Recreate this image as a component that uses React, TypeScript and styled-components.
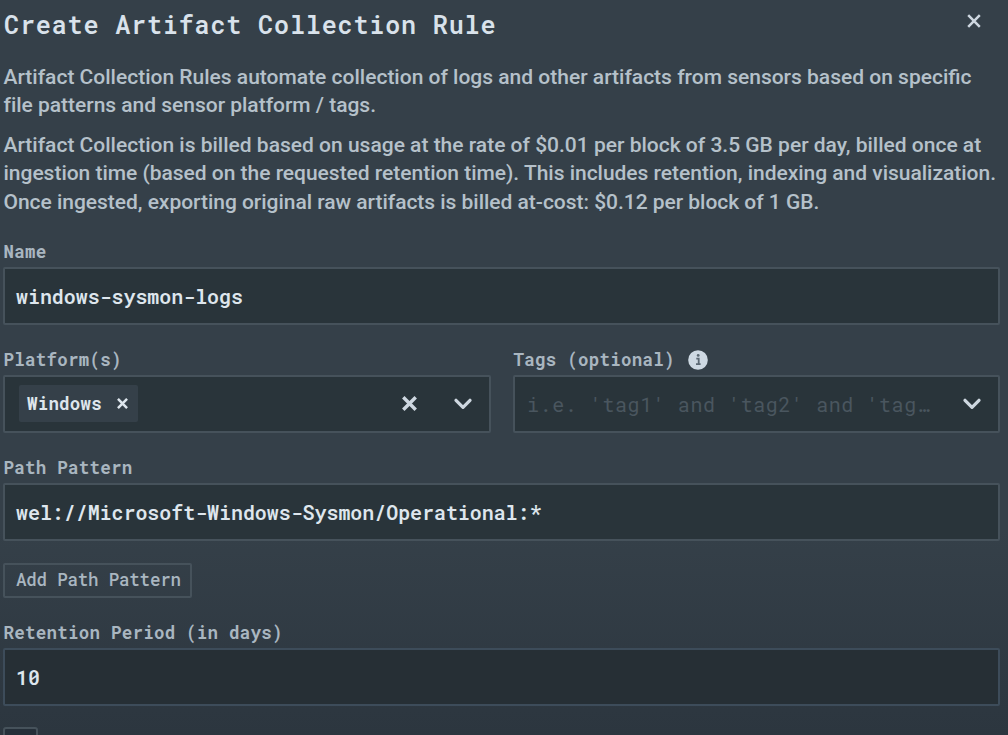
import React from "react";
import styled, { createGlobalStyle } from "styled-components";

const mono = `"Roboto Mono", "DejaVu Sans Mono", "Liberation Mono", monospace`;

const Global = createGlobalStyle`
  * { box-sizing: border-box; }
  html, body { margin: 0; background: #2d3740; }
  body { overflow: hidden; }
`;

const Dialog = styled.main`
  height: 735px;
  overflow: hidden;
  padding: 0 8px 0 3px;
  display: flex;
  flex-direction: column;
  background: linear-gradient(#354049 0, #354049 530px, #2d3740 710px, #2c363f 735px);
  font-family: Roboto, sans-serif;
  color: #b5c1ca;

  > * { flex-shrink: 0; }
`;

const Header = styled.header`
  display: flex;
  justify-content: space-between;
  align-items: flex-start;
  height: 63px;
  padding: 8px 19px 0 1px;
`;

const Title = styled.h1`
  margin: 0;
  font: 600 25px/34px ${mono};
  letter-spacing: 0.88px;
  color: #d9e2eb;
  white-space: nowrap;
`;

const IconButton = styled.button<{ $top?: number }>`
  display: flex;
  padding: 0;
  margin-top: ${(p) => p.$top ?? 0}px;
  border: 0;
  background: none;
  color: #ced7e0;
`;

const Copy = styled.p<{ $gap: number }>`
  margin: 0 0 ${(p) => p.$gap}px 0.5px;
  font-size: 21px;
  font-weight: 500;
  line-height: 28.3px;
  white-space: nowrap;
`;

const Line = styled.span<{ $spacing?: number }>`
  display: block;
  letter-spacing: ${(p) => p.$spacing ?? 0}px;
`;

const Field = styled.section<{ $gap: number }>`
  display: flex;
  flex-direction: column;
  margin-bottom: ${(p) => p.$gap}px;
  min-width: 0;
`;

const Label = styled.label`
  display: flex;
  align-items: center;
  gap: 13px;
  height: 29px;
  padding: 0 0 1px 0.5px;
  font: 700 17.5px/28px ${mono};
  letter-spacing: 0.24px;
  color: #a9b6c0;
  white-space: nowrap;
`;

const Box = styled.div<{ $focus?: boolean; $dark?: boolean }>`
  display: flex;
  align-items: center;
  height: 58px;
  padding: 0 17px 0 11px;
  border: 2px solid ${(p) => (p.$focus ? "#3d4c5a" : "#46525b")};
  border-radius: 2px;
  background: ${(p) => (p.$dark ? "#262f35" : "#29343a")};
`;

const Value = styled.span`
  font: 600 20px/28px ${mono};
  letter-spacing: -0.06px;
  color: #dee6ed;
`;

const Columns = styled.div`
  display: grid;
  grid-template-columns: 488px 487px;
  gap: 22px;
`;

const Chip = styled.span`
  display: flex;
  align-items: center;
  gap: 15px;
  height: 37px;
  margin-left: 3px;
  padding: 0 10px 0 8px;
  border-radius: 2px;
  background: #354049;
  color: #dee6ed;
  font: 700 17.5px/37px ${mono};
  letter-spacing: 0.2px;
`;

const Controls = styled.span`
  display: flex;
  align-items: center;
  gap: 37px;
  margin-left: auto;
  color: #ced7e0;
`;

const Placeholder = styled.span`
  margin-left: 1px;
  font: 400 20px/28px ${mono};
  letter-spacing: 0.57px;
  color: #4a565f;
  white-space: nowrap;
`;

const AddButton = styled.button`
  align-self: flex-start;
  width: 189px;
  height: 35px;
  margin-bottom: 21px;
  padding: 0 0 0 11px;
  border: 2px solid #46525b;
  border-radius: 2px;
  background: transparent;
  color: #a9b6c0;
  text-align: left;
  white-space: nowrap;
  font: 500 17.5px/30px ${mono};
  letter-spacing: -0.2px;
`;

const Checkbox = styled.span`
  flex: none;
  width: 35px;
  height: 34px;
  border: 2px solid #46525b;
  border-radius: 3px;
  background: #252f39;
`;

const Cross = ({ size, stroke }: { size: number; stroke: number }) => (
  <svg width={size} height={size} viewBox="0 0 14 14" fill="none" stroke="currentColor" strokeWidth={stroke}>
    <path d="M1.2 1.2 12.8 12.8M12.8 1.2 1.2 12.8" />
  </svg>
);

const Chevron = () => (
  <svg width="18" height="12" viewBox="0 0 18 12" fill="none" stroke="currentColor" strokeWidth="3.2" strokeLinecap="round" strokeLinejoin="round">
    <path d="m2 2.3 7 7 7-7" />
  </svg>
);

const Info = () => (
  <svg width="20" height="20" viewBox="0 0 20 20">
    <circle cx="10" cy="10" r="9.8" fill="#ced9e3" />
    <path d="M8.3 8.6h2.4v5.2M8 14.2h4.6" stroke="#5b6873" strokeWidth="1.8" fill="none" />
    <circle cx="10.2" cy="5.4" r="1.4" fill="#5b6873" />
  </svg>
);

export default function App() {
  return (
    <>
      <Global />
      <Dialog>
        <Header>
          <Title>Create Artifact Collection Rule</Title>
          <IconButton $top={6} aria-label="Close">
            <Cross size={14} stroke={2.5} />
          </IconButton>
        </Header>
        <Copy $gap={11.5}>
          <Line>Artifact Collection Rules automate collection of logs and other artifacts from sensors based on specific</Line>
          <Line $spacing={-0.02}>file patterns and sensor platform / tags.</Line>
        </Copy>
        <Copy $gap={22}>
          <Line>Artifact Collection is billed based on usage at the rate of $0.01 per block of 3.5 GB per day, billed once at</Line>
          <Line $spacing={-0.02}>ingestion time (based on the requested retention time). This includes retention, indexing and visualization.</Line>
          <Line $spacing={-0.03}>Once ingested, exporting original raw artifacts is billed at-cost: $0.12 per block of 1 GB.</Line>
        </Copy>
        <Field $gap={21}>
          <Label>Name</Label>
          <Box><Value>windows-sysmon-logs</Value></Box>
        </Field>
        <Columns>
          <Field $gap={21}>
            <Label>Platform(s)</Label>
            <Box>
              <Chip>Windows<Cross size={11} stroke={3.2} /></Chip>
              <Controls><Cross size={15} stroke={3.2} /><Chevron /></Controls>
            </Box>
          </Field>
          <Field $gap={21}>
            <Label>Tags (optional)<Info /></Label>
            <Box>
              <Placeholder>i.e. 'tag1' and 'tag2' and 'tag…</Placeholder>
              <Controls><Chevron /></Controls>
            </Box>
          </Field>
        </Columns>
        <Field $gap={22}>
          <Label>Path Pattern</Label>
          <Box><Value>wel://Microsoft-Windows-Sysmon/Operational:*</Value></Box>
        </Field>
        <AddButton>Add Path Pattern</AddButton>
        <Field $gap={21}>
          <Label>Retention Period (in days)</Label>
          <Box $focus $dark><Value>10</Value></Box>
        </Field>
        <Checkbox />
      </Dialog>
    </>
  );
}
